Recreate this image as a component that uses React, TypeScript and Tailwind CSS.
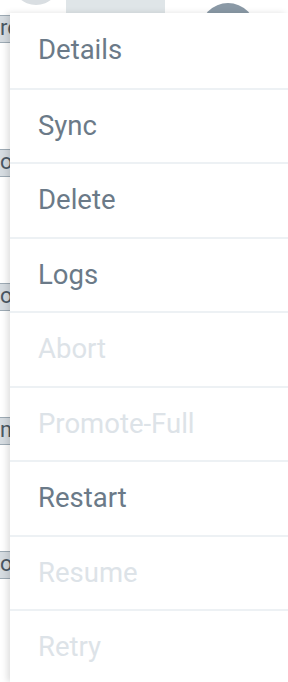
import React from 'react';

const items: { label: string; disabled?: boolean }[] = [
  { label: 'Details' },
  { label: 'Sync' },
  { label: 'Delete' },
  { label: 'Logs' },
  { label: 'Abort', disabled: true },
  { label: 'Promote-Full', disabled: true },
  { label: 'Restart' },
  { label: 'Resume', disabled: true },
  { label: 'Retry', disabled: true },
];

// little status tags peeking out from behind the menu
const tags = ['re', 'o', 'o', 'm', 'o'];

const App: React.FC = () => {
  return (
    <div className="relative w-[288px] h-[682px] overflow-hidden bg-white" style={{ fontFamily: 'Roboto, "Liberation Sans", sans-serif' }}>
      {/* page underneath */}
      <div className="flex">
        <div className="flex flex-col gap-[106px] pt-[15px] w-[60px]">
          {tags.map((t, i) => (
            <div
              key={i}
              className="h-[28px] border-y border-[#9eabb5] bg-[#d6dce1] text-[#4b5863] text-[22px] leading-[24px]"
            >
              {t}
            </div>
          ))}
        </div>
        <div className="w-[99px] h-[14px] ml-[6px] bg-[#dfe5e8]" />
        <div className="w-[56px] h-[56px] ml-[35px] mt-[3px] rounded-full bg-[#8a99a6]" />
      </div>
      <div className="absolute left-[12px] top-[-44px] w-[48px] h-[49px] rounded-full bg-[#d9dee2]" />

      {/* dropdown menu */}
      <div className="absolute left-[10px] top-[13px] right-0 bottom-0 bg-white shadow-[-3px_0_6px_rgba(0,0,0,0.12)]">
        <ul className="flex flex-col">
          {items.map((it, i) => (
            <li
              key={it.label}
              className={`h-[74.5px] flex items-center pl-[28px] pb-[1px] text-[27.5px] ${i > 0 ? 'border-t-2 border-[#edf1f4]' : ''} ${it.disabled ? 'text-[#dde3e8]' : 'text-[#6b7a88]'}`}
            >
              {it.label}
            </li>
          ))}
        </ul>
      </div>
    </div>
  );
};

export default App;
